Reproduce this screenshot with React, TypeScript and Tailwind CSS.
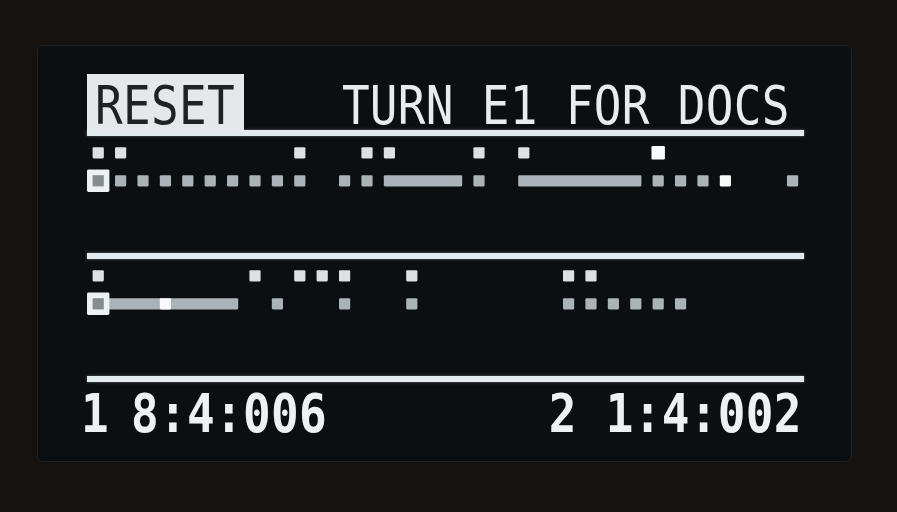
import React from 'react';

// norns-style OLED: 128x64 px, each px ~5.6 screen px
type Dot = { x: number; w?: number; c: string };

const GRAY = '#aab3b7';
const LIGHT = '#dce1e3';
const BRIGHT = '#f8fafa';

const step = (k: number, c = GRAY): Dot => ({ x: 4 * k + 1, c });
const bar = (a: number, b: number, c = GRAY): Dot => ({ x: 4 * a + 1, w: 4 * (b - a) + 2, c });

const tracks: { top: Dot[]; bottom: Dot[] }[] = [
  {
    top: [
      ...[0, 1, 9, 12, 13, 17, 19].map((k) => step(k, LIGHT)),
      { x: 100.8, w: 2.4, c: BRIGHT },
    ],
    bottom: [
      ...[1, 2, 3, 4, 5, 6, 7, 8, 9, 11, 12].map((k) => step(k)),
      bar(13, 16),
      step(17),
      bar(19, 24),
      step(25),
      step(26),
      step(27),
      step(28, BRIGHT),
      step(31),
    ],
  },
  {
    top: [0, 7, 9, 10, 11, 14, 21, 22].map((k) => step(k, LIGHT)),
    bottom: [
      { x: 3, w: 24, c: GRAY },
      step(3, BRIGHT),
      step(8),
      step(11),
      step(14),
      ...[21, 22, 23, 24, 25, 26].map((k) => step(k)),
    ],
  },
];

function Track({ top, bottom }: { top: Dot[]; bottom: Dot[] }) {
  return (
    <svg width="716.8" height="117.6" viewBox="0 0 128 21" className="block">
      {top.map((d, i) => (
        <rect key={`t${i}`} x={d.x} y={d.w === 2.4 ? 1.8 : 2} width={d.w ?? 2} height={d.w === 2.4 ? 2.4 : 2} rx={0.2} fill={d.c} />
      ))}
      {bottom.map((d, i) => (
        <rect key={`b${i}`} x={d.x} y={7} width={d.w ?? 2} height={2} rx={0.2} fill={d.c} />
      ))}
      <rect x={0} y={6} width={4} height={4} rx={0.25} fill="#eef1f2" />
      <rect x={1} y={7} width={2} height={2} fill="#858d91" />
    </svg>
  );
}

function Rule() {
  return <div className="h-[5.6px] w-full bg-[#e2ebef] shadow-[0_0_3px_rgba(210,230,240,0.45)]" />;
}

const txt =
  "font-['DejaVu_Sans_Mono',monospace] text-[46px] leading-none tracking-[0.3px] whitespace-nowrap scale-y-[1.16] origin-[50%_39px]";

export default function App() {
  return (
    <div className="w-[897px] h-[512px] bg-[#16120f] pt-[45px] pl-[37px] overflow-hidden">
      <div className="w-[815px] h-[417px] rounded-[6px] bg-[#0b0f11] border border-[#1b2225] pt-[28px] pl-[49px]">
        <div className="w-[716.8px] flex flex-col">
          {/* header */}
          <div className="h-[56px] flex justify-between items-start">
            <div className="h-full w-[157px] bg-[#e4e8ea] pl-[8px]">
              <div className={`${txt} mt-[11px] text-[#1e2224]`}>RESET</div>
            </div>
            <div className={`${txt} mt-[11px] mr-[14px] text-[#e8ecee]`}>TURN E1 FOR DOCS</div>
          </div>
          <Rule />
          <Track {...tracks[0]} />
          <Rule />
          <Track {...tracks[1]} />
          <Rule />
          {/* footer */}
          <div className="h-[50.4px] flex justify-between items-start text-[#eef1f2] font-bold">
            <div className="flex ml-[-6px] mt-[11px]">
              <span className={txt}>1</span>
              <span className={`${txt} ml-[22px]`}>8:4:006</span>
            </div>
            <div className="flex mr-[2px] mt-[11px]">
              <span className={txt}>2</span>
              <span className={`${txt} ml-[29px]`}>1:4:002</span>
            </div>
          </div>
        </div>
      </div>
    </div>
  );
}
